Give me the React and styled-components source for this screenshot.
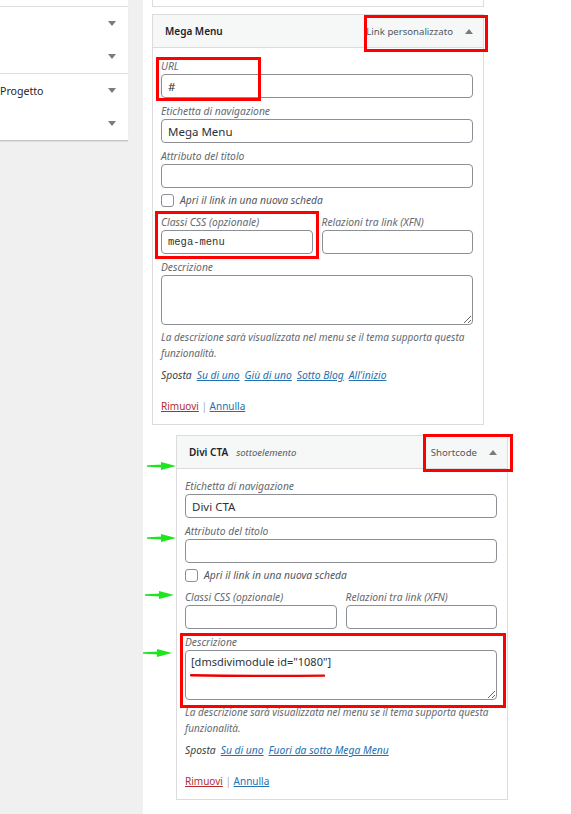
import React from 'react';
import styled, { createGlobalStyle } from 'styled-components';

const GlobalStyle = createGlobalStyle`
  body {
    margin: 0;
    background: #f0f0f1;
    font-family: "Noto Sans", "Open Sans", sans-serif;
    color: #1d2327;
  }
`;

const Page = styled.div`
  display: flex;
  height: 814px;
  overflow: hidden;
`;

// left column: the collapsed menu boxes
const Sidebar = styled.div`
  width: 128px;
  flex: none;
  align-self: flex-start;
  background: #fff;
  padding-top: 6px;
  box-shadow: 0 1px 0 #c3c4c7, 0 2px 1px rgba(0, 0, 0, 0.06);
`;

const SideGroup = styled.div`
  border-top: 1px solid #dcdcde;
`;

const SideRow = styled.div`
  height: 33px;
  display: flex;
  align-items: center;
  justify-content: space-between;
  padding-right: 12px;
  font-size: 10.6px;
  color: #1d2327;
`;

const Caret = styled.span`
  width: 0;
  height: 0;
  flex: none;
  border-left: 4px solid transparent;
  border-right: 4px solid transparent;
  ${p => (p.$up ? 'border-bottom' : 'border-top')}: 5px solid #787c82;
`;

const Main = styled.div`
  flex: 1;
  margin-left: 15px;
  background: #fff;
  padding-left: 9px;
`;

const PrevCard = styled.div`
  width: 332px;
  height: 7px;
  box-sizing: border-box;
  border: 1px solid #dcdcde;
  border-top: none;
  margin-bottom: 7px;
`;

const Card = styled.div`
  position: relative;
  width: 332px;
  box-sizing: border-box;
  border: 1px solid #dcdcde;
  margin-left: ${p => p.$depth * 24}px;
  margin-top: ${p => (p.$depth ? 10 : 0)}px;
`;

const CardHead = styled.div`
  height: 32px;
  display: flex;
  align-items: center;
  padding: 0 10px 0 12px;
  background: #f6f7f7;
  border-bottom: 1px solid #dcdcde;
`;

const ItemTitle = styled.span`
  font-size: 10px;
  font-weight: 600;
  color: #1d2327;
`;

const SubTag = styled.span`
  font-size: 9.5px;
  font-style: italic;
  color: #50575e;
  margin-left: 8px;
`;

const ItemType = styled.span`
  margin-left: auto;
  margin-right: 12px;
  font-size: 9.6px;
  color: #50575e;
`;

const CardBody = styled.div`
  padding: ${p => p.$top}px 10px 10px 8px;
`;

const Field = styled.div`
  margin-bottom: 6px;
`;

const Label = styled.div`
  font-size: 10.3px;
  font-style: italic;
  line-height: 15px;
  color: #646970;
  white-space: nowrap;
`;

const TextInput = styled.input`
  display: block;
  width: 100%;
  height: 24px;
  box-sizing: border-box;
  margin: 0;
  border: 1px solid #8c8f94;
  border-radius: 4px;
  padding: 0 6px;
  font-family: ${p => (p.$mono ? '"Liberation Mono", monospace' : '"Noto Sans", sans-serif')};
  font-size: ${p => (p.$mono ? 10.5 : 11.5)}px;
  color: #2c3338;
  background: #fff;
  outline: none;
`;

const TextArea = styled.textarea`
  display: block;
  width: 100%;
  height: ${p => p.$h}px;
  box-sizing: border-box;
  margin: 0;
  border: 1px solid #8c8f94;
  border-radius: 4px;
  padding: 3px 5px;
  font-family: "Noto Sans", sans-serif;
  font-size: 11px;
  color: #2c3338;
  resize: vertical;
  outline: none;
`;

const Pair = styled.div`
  display: grid;
  grid-template-columns: 1fr 1fr;
  gap: 9px;
`;

const CheckRow = styled.div`
  display: flex;
  align-items: center;
  gap: 6px;
  margin: -1px 0 8px;
  height: 14px;
  font-size: 10.3px;
  font-style: italic;
  color: #50575e;
`;

const CheckBox = styled.span`
  width: 13px;
  height: 13px;
  box-sizing: border-box;
  border: 1px solid #8c8f94;
  border-radius: 3px;
  background: #fff;
`;

const Help = styled.p`
  margin: -2px 0 0;
  font-size: 10px;
  font-style: italic;
  line-height: 16px;
  color: #646970;
`;

const MoveRow = styled.div`
  margin-top: 6px;
  font-size: 10.3px;
  font-style: italic;
  line-height: 16px;
  color: #3c434a;
`;

const MoveLink = styled.a`
  margin-left: 5px;
  color: #2271b1;
  text-decoration: underline;
`;

const Actions = styled.div`
  margin-top: 15px;
  font-size: 10px;
  line-height: 16px;
  color: #a7aaad;
`;

const ActionLink = styled.a`
  color: ${p => (p.$danger ? '#b32d2e' : '#2271b1')};
  text-decoration: underline;
`;

// hand-drawn markup on top of the screen
const Mark = styled.div`
  position: absolute;
  left: ${p => p.$x}px;
  top: ${p => p.$y}px;
  width: ${p => p.$w}px;
  height: ${p => p.$h}px;
  box-sizing: border-box;
  border: 3px solid #ff0000;
  pointer-events: none;
`;

const Pointer = styled.svg`
  position: absolute;
  left: ${p => p.$x}px;
  top: ${p => p.$y}px;
  pointer-events: none;
`;

const GreenArrow = ({ x, y }) => (
  <Pointer $x={x} $y={y - 5} width="30" height="10" viewBox="0 0 30 10">
    <path d="M0 4.2 L16 3.6 L16 6.4 L0 5.8 Z" fill="#1ee61e" />
    <path d="M14 1 L29 5 L14 9 Z" fill="#1ee61e" />
  </Pointer>
);

const Underline = ({ x, y, w }) => (
  <Pointer $x={x} $y={y} width={w} height="5" viewBox={`0 0 ${w} 5`}>
    <path d={`M1 2.2 Q ${w / 2} 3.4 ${w - 1} 2.6`} stroke="#ee0000" strokeWidth="2.4" fill="none" strokeLinecap="round" />
  </Pointer>
);

const MenuField = ({ label, value, mono }) => (
  <Field>
    <Label>{label}</Label>
    <TextInput readOnly value={value || ''} $mono={mono} />
  </Field>
);

const ItemBody = ({ top, url, navLabel, cssClass, description, moves }) => (
  <CardBody $top={top}>
    {url !== undefined && <MenuField label="URL" value={url} />}
    <MenuField label="Etichetta di navigazione" value={navLabel} />
    <MenuField label="Attributo del titolo" />
    <CheckRow>
      <CheckBox />
      Apri il link in una nuova scheda
    </CheckRow>
    <Pair>
      <MenuField label="Classi CSS (opzionale)" value={cssClass} mono />
      <MenuField label="Relazioni tra link (XFN)" />
    </Pair>
    <Field>
      <Label>Descrizione</Label>
      <TextArea readOnly value={description} $h={50} />
    </Field>
    <Help>La descrizione sarà visualizzata nel menu se il tema supporta questa funzionalità.</Help>
    <MoveRow>
      Sposta
      {moves.map(m => (
        <MoveLink key={m}>{m}</MoveLink>
      ))}
    </MoveRow>
    <Actions>
      <ActionLink $danger>Rimuovi</ActionLink> | <ActionLink>Annulla</ActionLink>
    </Actions>
  </CardBody>
);

export default function App() {
  return (
    <>
      <GlobalStyle />
      <Page>
        <Sidebar>
          <SideGroup>
            <SideRow><span /><Caret /></SideRow>
            <SideRow><span /><Caret /></SideRow>
          </SideGroup>
          <SideGroup>
            <SideRow><span>Progetto</span><Caret /></SideRow>
            <SideRow><span /><Caret /></SideRow>
          </SideGroup>
        </Sidebar>

        <Main>
          <PrevCard />

          <Card $depth={0}>
            <CardHead>
              <ItemTitle>Mega Menu</ItemTitle>
              <ItemType>Link personalizzato</ItemType>
              <Caret $up />
            </CardHead>
            <ItemBody
              top={11}
              url="#"
              navLabel="Mega Menu"
              cssClass="mega-menu"
              description=""
              moves={['Su di uno', 'Giù di uno', 'Sotto Blog', "All'inizio"]}
            />
            <Mark $x={211} $y={0} $w={124} $h={37} />
            <Mark $x={3} $y={42} $w={105} $h={44} />
            <Mark $x={2} $y={196} $w={164} $h={48} />
          </Card>

          <Card $depth={1}>
            <CardHead>
              <ItemTitle>Divi CTA</ItemTitle>
              <SubTag>sottoelemento</SubTag>
              <ItemType>Shortcode</ItemType>
              <Caret $up />
            </CardHead>
            <ItemBody
              top={10}
              navLabel="Divi CTA"
              description={'[dmsdivimodule id="1080"]'}
              moves={['Su di uno', 'Fuori da sotto Mega Menu']}
            />
            <Mark $x={246} $y={-2} $w={90} $h={38} />
            <Mark $x={3} $y={197} $w={326} $h={75} />
            <Underline x={13} y={237} w={135} />
            <GreenArrow x={-30} y={30} />
            <GreenArrow x={-30} y={102} />
            <GreenArrow x={-32} y={159} />
            <GreenArrow x={-34} y={217} />
          </Card>
        </Main>
      </Page>
    </>
  );
}
